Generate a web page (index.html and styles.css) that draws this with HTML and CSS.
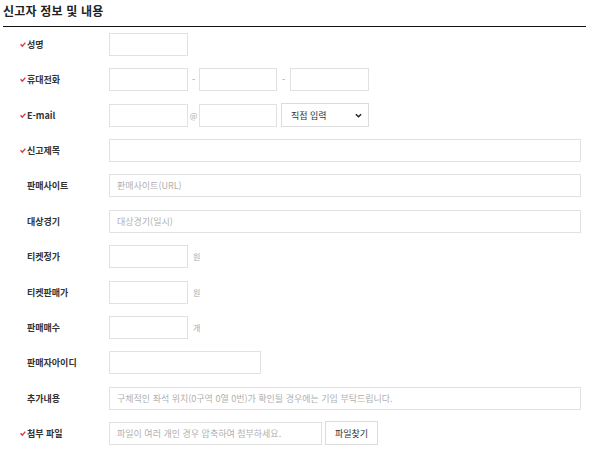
FILE: index.html
```html
<!DOCTYPE html>
<html lang="ko">
<head>
<meta charset="utf-8">
<link rel="stylesheet" href="styles.css">
</head>
<body>
<div class="wrap">
  <h2 class="title">신고자 정보 및 내용</h2>
  <div class="form">
    <div class="row">
      <div class="label req"><svg class="chk" viewBox="0 0 6 5"><polyline points="0.6,2.2 2.3,4.2 5.4,0.6"/></svg>성명</div>
      <div class="field"><span class="inp w79"></span></div>
    </div>
    <div class="row">
      <div class="label req"><svg class="chk" viewBox="0 0 6 5"><polyline points="0.6,2.2 2.3,4.2 5.4,0.6"/></svg>휴대전화</div>
      <div class="field">
        <span class="inp w79"></span><span class="sep">-</span><span class="inp w78"></span><span class="sep sep2">-</span><span class="inp w79"></span>
      </div>
    </div>
    <div class="row">
      <div class="label req"><svg class="chk" viewBox="0 0 6 5"><polyline points="0.6,2.2 2.3,4.2 5.4,0.6"/></svg>E-mail</div>
      <div class="field">
        <span class="inp w79"></span><span class="sep at">@</span><span class="inp w78"></span>
        <span class="select">직접 입력<svg class="chev" viewBox="0 0 8 5"><polyline points="1,1 4,4 7,1"/></svg></span>
      </div>
    </div>
    <div class="row">
      <div class="label req"><svg class="chk" viewBox="0 0 6 5"><polyline points="0.6,2.2 2.3,4.2 5.4,0.6"/></svg>신고제목</div>
      <div class="field"><span class="inp wide"></span></div>
    </div>
    <div class="row">
      <div class="label">판매사이트</div>
      <div class="field"><span class="inp wide ph">판매사이트(URL)</span></div>
    </div>
    <div class="row">
      <div class="label">대상경기</div>
      <div class="field"><span class="inp wide ph">대상경기(일시)</span></div>
    </div>
    <div class="row">
      <div class="label">티켓정가</div>
      <div class="field"><span class="inp w79"></span><span class="unit">원</span></div>
    </div>
    <div class="row">
      <div class="label">티켓판매가</div>
      <div class="field"><span class="inp w79"></span><span class="unit">원</span></div>
    </div>
    <div class="row">
      <div class="label">판매매수</div>
      <div class="field"><span class="inp w79"></span><span class="unit">개</span></div>
    </div>
    <div class="row">
      <div class="label">판매자아이디</div>
      <div class="field"><span class="inp w152"></span></div>
    </div>
    <div class="row">
      <div class="label">추가내용</div>
      <div class="field"><span class="inp wide ph">구체적인 좌석 위치(0구역 0열 0번)가 확인될 경우에는 기입 부탁드립니다.</span></div>
    </div>
    <div class="row">
      <div class="label req"><svg class="chk" viewBox="0 0 6 5"><polyline points="0.6,2.2 2.3,4.2 5.4,0.6"/></svg>첨부 파일</div>
      <div class="field"><span class="inp w213 ph">파일이 여러 개인 경우 압축하여 첨부하세요.</span><span class="btn">파일찾기</span></div>
    </div>
  </div>
</div>
</body>
</html>
```

FILE: styles.css
```css
html, body {
  margin: 0;
  padding: 0;
  background: #fff;
}
body {
  font-family: "Noto Sans CJK KR", "Noto Sans", sans-serif;
  color: #333;
}
.wrap {
  margin-left: 3px;
  width: 583px;
}
.title {
  margin: 0;
  padding-top: 3px;
  padding-bottom: 7px;
  font-size: 12px;
  line-height: 16px;
  font-weight: 700;
  color: #222;
  letter-spacing: 0.2px;
  border-bottom: 1px solid #111;
}
.form {
  padding-top: 6px;
  display: flex;
  flex-direction: column;
  gap: 12.36px;
}
.row {
  display: flex;
  align-items: center;
  height: 23px;
}
.label {
  width: 106px;
  flex: none;
  box-sizing: border-box;
  padding-left: 24px;
  font-size: 9px;
  font-weight: 700;
  color: #333;
  display: flex;
  align-items: center;
  white-space: nowrap;
}
.label.req {
  padding-left: 17px;
}
.chk {
  width: 6px;
  height: 5px;
  margin-right: 1px;
  fill: none;
  stroke: #e4343f;
  stroke-width: 1.4;
}
.field {
  display: flex;
  align-items: center;
  height: 23px;
}
.inp {
  box-sizing: border-box;
  height: 23px;
  border: 1px solid #e1e1e1;
  background: #fff;
  display: flex;
  align-items: center;
  font-size: 9px;
  color: #b0b0b0;
  padding-left: 7px;
  white-space: nowrap;
}
.w78 { width: 78px; }
.w79 { width: 79px; }
.w152 { width: 152px; }
.w213 { width: 213px; }
.wide { width: 472px; }
.sep {
  width: 11px;
  text-align: center;
  font-size: 9px;
  color: #999;
}
.sep2 { width: 13px; }
.at {
  font-size: 8px;
  color: #aaa;
}
.select {
  box-sizing: border-box;
  width: 88px;
  height: 24px;
  margin-left: 4px;
  border: 1px solid #dcdcdc;
  display: flex;
  align-items: center;
  justify-content: space-between;
  padding: 0 6px 0 9px;
  font-size: 9px;
  color: #333;
}
.chev {
  width: 7px;
  height: 5px;
  fill: none;
  stroke: #222;
  stroke-width: 1.6;
}
.unit {
  margin-left: 5px;
  font-size: 8px;
  color: #aaa;
}
.btn {
  box-sizing: border-box;
  width: 53px;
  height: 24px;
  margin-left: 3px;
  border: 1px solid #dcdcdc;
  display: flex;
  align-items: center;
  justify-content: center;
  font-size: 9px;
  color: #333;
  background: #fff;
}
```
